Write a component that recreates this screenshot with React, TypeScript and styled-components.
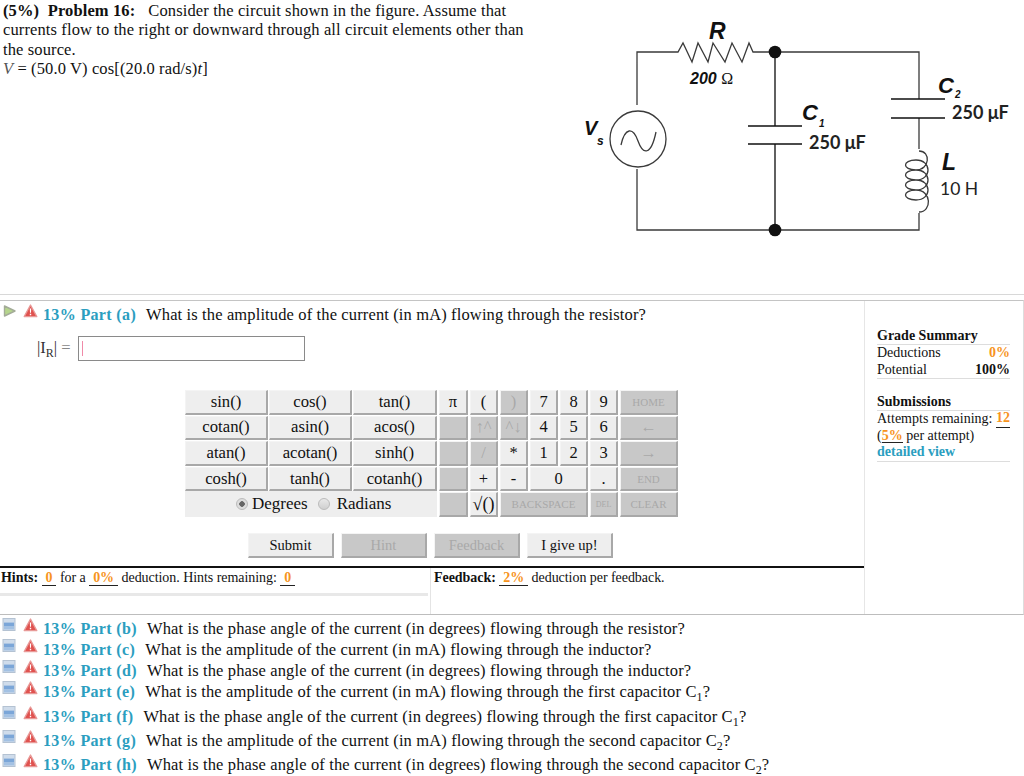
import React from 'react';
import styled, { createGlobalStyle } from 'styled-components';

const GlobalStyle = createGlobalStyle`
  html, body {
    margin: 0;
    padding: 0;
    background: #fff;
    font-family: "Liberation Serif", "Times New Roman", serif;
    color: #111;
  }
`;

const trigKeys = [
  'sin()', 'cos()', 'tan()',
  'cotan()', 'asin()', 'acos()',
  'atan()', 'acotan()', 'sinh()',
  'cosh()', 'tanh()', 'cotanh()',
];

type PadKey = { label: string; off?: boolean; span?: number; size?: number };

const padKeys: PadKey[] = [
  { label: 'π' }, { label: '(' }, { label: ')', off: true }, { label: '7' }, { label: '8' }, { label: '9' }, { label: 'HOME', off: true, size: 11 },
  { label: '', off: true }, { label: '↑^', off: true }, { label: '^↓', off: true }, { label: '4' }, { label: '5' }, { label: '6' }, { label: '←', off: true },
  { label: '', off: true }, { label: '/', off: true }, { label: '*' }, { label: '1' }, { label: '2' }, { label: '3' }, { label: '→', off: true },
  { label: '', off: true }, { label: '+' }, { label: '-' }, { label: '0', span: 2 }, { label: '.' }, { label: 'END', off: true, size: 11 },
  { label: '', off: true }, { label: '√()', size: 18 }, { label: 'BACKSPACE', off: true, span: 3, size: 11 }, { label: 'DEL', off: true, size: 8 }, { label: 'CLEAR', off: true, size: 11 },
];

const parts: { letter: string; text: React.ReactNode; height: number }[] = [
  { letter: 'b', height: 21, text: 'What is the phase angle of the current (in degrees) flowing through the resistor?' },
  { letter: 'c', height: 21, text: 'What is the amplitude of the current (in mA) flowing through the inductor?' },
  { letter: 'd', height: 21, text: 'What is the phase angle of the current (in degrees) flowing through the inductor?' },
  { letter: 'e', height: 25, text: <>What is the amplitude of the current (in mA) flowing through the first capacitor C<sub>1</sub>?</> },
  { letter: 'f', height: 24, text: <>What is the phase angle of the current (in degrees) flowing through the first capacitor C<sub>1</sub>?</> },
  { letter: 'g', height: 24, text: <>What is the amplitude of the current (in mA) flowing through the second capacitor C<sub>2</sub>?</> },
  { letter: 'h', height: 24, text: <>What is the phase angle of the current (in degrees) flowing through the second capacitor C<sub>2</sub>?</> },
];

const PlayIcon = () => (
  <svg width="15" height="14" viewBox="0 0 15 14">
    <path d="M2.5 2 L13 7 L2.5 12 Z" fill="#b5d58c" stroke="#a3ab98" strokeWidth="1.4" strokeLinejoin="round" />
  </svg>
);

const WarnIcon = () => (
  <svg width="15" height="14" viewBox="0 0 15 14">
    <path d="M7.5 1 L13.8 12.6 L1.2 12.6 Z" fill="#e0524f" stroke="#e89a98" strokeWidth="1.3" strokeLinejoin="round" />
    <path d="M6.8 4.4 h1.4 l-0.2 4.4 h-1 Z M6.8 9.8 h1.4 v1.4 h-1.4 Z" fill="#fff" />
  </svg>
);

const MinusIcon = () => (
  <svg width="15" height="14" viewBox="0 0 15 14">
    <rect x="1" y="0.5" width="12" height="12" fill="#cfdceb" stroke="#b4c2d2" />
    <rect x="2" y="4.6" width="10" height="3.4" fill="#7ba6d8" />
    <rect x="2" y="8" width="10" height="3.4" fill="#a3c1e3" />
  </svg>
);

const Circuit = () => (
  <CircuitSvg width="464" height="250" viewBox="560 0 464 250">
    <g fill="none" stroke="#3a3a3a" strokeWidth="1.3">
      <path d="M637 105 V52 H678 L683 43 L692 62 L698 43 L708 62 L713 43 L725 62 L732 43 L742 62 L749 43 L753 52 H919 V99" />
      <path d="M637 169 V230 H919 V213" />
      <path d="M775 52 V126 M775 144 V230" strokeWidth="1.6" />
      <path d="M919 118 V149" />
      <path d="M748 126 H802 M748 144 H802 M891 99 H945 M891 118 H945" stroke="#111" strokeWidth="1.6" />
      <circle cx="638" cy="139" r="28" />
      <path d="M621 145 C625 127 633 127 638 141 C643 155 651 156 656 132" />
      <path d="M919 151 C931 151 930 170 916 170 C902 170 902 160 916 160 C932 160 932 180 916 180 C902 180 902 170 916 170 C932 170 932 190 916 190 C902 190 902 180 916 180 C932 180 932 200 916 200 C902 200 902 190 916 190 C932 190 932 212 919 212" />
    </g>
    <circle cx="775" cy="52" r="6.3" fill="#111" />
    <circle cx="775" cy="230" r="6.3" fill="#111" />
    <CircuitLabel x="709" y="39" $size={23}>R</CircuitLabel>
    <CircuitLabel x="690" y="84" $size={16}>200 <tspan fontFamily='"Liberation Serif", serif' fontStyle="normal" fontWeight="400">Ω</tspan></CircuitLabel>
    <CircuitLabel x="584" y="135" $size={20}>V</CircuitLabel>
    <CircuitLabel x="597" y="145" $size={12}>s</CircuitLabel>
    <CircuitLabel x="802" y="120" $size={22}>C</CircuitLabel>
    <CircuitLabel x="819" y="127" $size={10}>1</CircuitLabel>
    <CircuitValue x="809" y="149">250 μF</CircuitValue>
    <CircuitLabel x="938" y="93" $size={22}>C</CircuitLabel>
    <CircuitLabel x="955" y="98" $size={10}>2</CircuitLabel>
    <CircuitValue x="952" y="119">250 μF</CircuitValue>
    <CircuitLabel x="942" y="170" $size={23}>L</CircuitLabel>
    <CircuitValue x="940" y="195" $light>10 H</CircuitValue>
  </CircuitSvg>
);

export default function App() {
  return (
    <Page>
      <GlobalStyle />
      <Header>
        <Statement>
          <StatementLine>
            <StatementHead>(5%)&nbsp; Problem 16:</StatementHead>
            <span>Consider the circuit shown in the figure. Assume that</span>
          </StatementLine>
          <StatementLine>currents flow to the right or downward through all circuit elements other than</StatementLine>
          <StatementLine>the source.</StatementLine>
          <StatementLine><Muted>V</Muted> = (50.0 V) cos[(20.0 rad/s)<i>t</i>]</StatementLine>
        </Statement>
        <Circuit />
      </Header>

      <PartBox>
        <MainColumn>
          <PartRow $height={21} $top>
            <IconSlot><PlayIcon /></IconSlot>
            <IconSlot><WarnIcon /></IconSlot>
            <PartLabel>13% Part (a)</PartLabel>
            <PartText>What is the amplitude of the current (in mA) flowing through the resistor?</PartText>
          </PartRow>

          <AnswerRow>
            <AnswerLabel><Dark>|I<sub>R</sub>|</Dark> =</AnswerLabel>
            <AnswerInput><Caret /></AnswerInput>
          </AnswerRow>

          <Calculator>
            <TrigPanel>
              <TrigGrid>
                {trigKeys.map((k) => <TrigKey key={k}>{k}</TrigKey>)}
              </TrigGrid>
              <AngleRow>
                <Radio $checked /><span>Degrees</span>
                <Radio /><span>Radians</span>
              </AngleRow>
            </TrigPanel>
            <PadGrid>
              {padKeys.map((k, i) => (
                <PadKeyCell key={i} $off={k.off} $span={k.span} $size={k.size}>{k.label}</PadKeyCell>
              ))}
            </PadGrid>
          </Calculator>

          <ActionRow>
            <ActionButton>Submit</ActionButton>
            <ActionButton $off>Hint</ActionButton>
            <ActionButton $off>Feedback</ActionButton>
            <ActionButton>I give up!</ActionButton>
          </ActionRow>

          <InfoRow>
            <InfoCell>
              <InfoLine>
                <b>Hints:</b>&nbsp;<Amount>0</Amount>&nbsp;for a&nbsp;<Amount>0%</Amount>&nbsp;deduction. Hints remaining:&nbsp;<Amount>0</Amount>
              </InfoLine>
              <HintRule />
            </InfoCell>
            <FeedbackCell>
              <InfoLine>
                <b>Feedback:</b>&nbsp;<Amount>2%</Amount>&nbsp;deduction per feedback.
              </InfoLine>
            </FeedbackCell>
          </InfoRow>
        </MainColumn>

        <SummaryColumn>
          <SummaryTitle>Grade Summary</SummaryTitle>
          <SummaryRow><span>Deductions</span><Orange>0%</Orange></SummaryRow>
          <SummaryRow $last><span>Potential</span><b>100%</b></SummaryRow>
          <SummaryTitle $gap>Submissions</SummaryTitle>
          <SummaryRow><span>Attempts remaining:</span><Amount $tight>12</Amount></SummaryRow>
          <SummaryPlain>(<Amount $tight>5%</Amount> per attempt)</SummaryPlain>
          <DetailLink>detailed view</DetailLink>
        </SummaryColumn>
      </PartBox>

      <PartList>
        {parts.map((p) => (
          <PartRow key={p.letter} $height={p.height}>
            <IconSlot><MinusIcon /></IconSlot>
            <IconSlot><WarnIcon /></IconSlot>
            <PartLabel>13% Part ({p.letter})</PartLabel>
            <PartText>{p.text}</PartText>
          </PartRow>
        ))}
      </PartList>
    </Page>
  );
}

const Page = styled.div`
  width: 1024px;
  height: 776px;
  overflow: hidden;
`;

const Header = styled.div`
  height: 294px;
  display: flex;
  justify-content: space-between;
  border-bottom: 1px solid #d8d8d8;
  margin-bottom: 5px;
`;

const Statement = styled.div`
  width: 530px;
  padding: 1px 0 0 3px;
  font-size: 16.5px;
  letter-spacing: 0.12px;
  line-height: 19.4px;
  box-sizing: border-box;
`;

const StatementLine = styled.div`
  white-space: nowrap;
`;

const StatementHead = styled.b`
  font-weight: 700;
  margin-right: 13px;
`;

const Muted = styled.i`
  color: #555;
`;

const CircuitSvg = styled.svg`
  display: block;
`;

const CircuitLabel = styled.text<{ $size: number }>`
  font-family: "Liberation Sans", Arial, sans-serif;
  font-weight: 700;
  font-style: italic;
  font-size: ${(p) => p.$size}px;
  fill: #111;
`;

const CircuitValue = styled.text<{ $light?: boolean }>`
  font-family: "Lato", "Open Sans", sans-serif;
  font-weight: ${(p) => (p.$light ? 400 : 700)};
  font-size: ${(p) => (p.$light ? 17.5 : 18)}px;
  fill: #222;
`;

const PartBox = styled.div`
  display: flex;
  height: 315px;
  box-sizing: border-box;
  border-top: 1px solid #c4c4c4;
  border-bottom: 1px solid #bdbdbd;
  border-right: 1px solid #ddd;
`;

const MainColumn = styled.div`
  width: 864px;
  display: flex;
  flex-direction: column;
  border-right: 1px solid #e6e6e6;
`;

const PartRow = styled.div<{ $height: number; $top?: boolean }>`
  display: flex;
  align-items: baseline;
  height: ${(p) => p.$height}px;
  padding-top: ${(p) => (p.$top ? 3 : 0)}px;
  line-height: 21px;
  white-space: nowrap;
  font-size: 16.5px;

  sub {
    font-size: 12px;
    line-height: 0;
  }
`;

const IconSlot = styled.span`
  width: 21px;
  padding-left: 2px;
  box-sizing: border-box;
  align-self: flex-start;
  display: flex;
  svg {
    display: block;
  }
`;

const PartLabel = styled.b`
  color: #2b9ec0;
  font-weight: 700;
  font-size: 16px;
  letter-spacing: 0.35px;
  margin: 0 10px 0 1px;
`;

const PartText = styled.span`
  color: #111;
  letter-spacing: 0.13px;
`;

const AnswerRow = styled.div`
  display: flex;
  align-items: center;
  margin-top: 10px;
  padding-left: 37px;
  height: 26px;
`;

const AnswerLabel = styled.span`
  font-size: 16.5px;
  color: #888;
  width: 41px;

  sub {
    font-size: 12px;
    line-height: 0;
  }
`;

const Dark = styled.span`
  color: #333;
`;

const AnswerInput = styled.div`
  width: 227px;
  height: 25px;
  box-sizing: border-box;
  border: 1px solid #8a8a8a;
  padding: 4px 3px;
`;

const Caret = styled.div`
  width: 1px;
  height: 15px;
  background: #f08aa8;
`;

const Calculator = styled.div`
  display: flex;
  gap: 2px;
  margin: 29px 0 0 185px;
`;

const TrigPanel = styled.div`
  width: 252px;
`;

const TrigGrid = styled.div`
  display: grid;
  grid-template-columns: 83px 83px 84px;
  grid-auto-rows: 24.6px;
  gap: 1px;
`;

const KeyBase = styled.div`
  display: flex;
  align-items: center;
  justify-content: center;
  box-sizing: border-box;
  border-right: 2px solid #a8a8a8;
  border-bottom: 2px solid #a8a8a8;
  border-left: 1px solid #f4f4f4;
  border-top: 1px solid #f4f4f4;
  white-space: nowrap;
`;

const TrigKey = styled(KeyBase)`
  background: #eee;
  font-size: 16.7px;
`;

const AngleRow = styled.div`
  height: 26px;
  background: #eee;
  display: flex;
  align-items: center;
  font-size: 17px;
  padding-left: 51px;
`;

const Radio = styled.span<{ $checked?: boolean }>`
  width: 12px;
  height: 12px;
  border-radius: 50%;
  box-sizing: border-box;
  border: 1px solid #bbb;
  background: ${(p) =>
    p.$checked ? 'radial-gradient(circle, #666 0 2.5px, #ddd 3px)' : 'linear-gradient(#e8e8e8, #cfcfcf)'};
  margin-right: ${(p) => (p.$checked ? 4 : 7)}px;
  margin-left: ${(p) => (p.$checked ? 0 : 10)}px;
`;

const PadGrid = styled.div`
  display: grid;
  width: 239px;
  grid-template-columns: 29px 28px 28px 28px 28px 28px 58px;
  grid-auto-rows: 24.6px;
  gap: 1px 2px;
  align-content: start;
`;

const PadKeyCell = styled(KeyBase)<{ $off?: boolean; $span?: number; $size?: number }>`
  grid-column: span ${(p) => p.$span ?? 1};
  background: ${(p) => (p.$off ? '#c8c8c8' : '#eee')};
  color: ${(p) => (p.$off ? '#a9a9a9' : '#111')};
  font-size: ${(p) => p.$size ?? 16.5}px;
`;

const ActionRow = styled.div`
  display: flex;
  gap: 7px;
  margin: 16px 0 0 248px;
`;

const ActionButton = styled(KeyBase)<{ $off?: boolean }>`
  width: 86px;
  height: 25px;
  font-size: 14.5px;
  background: ${(p) => (p.$off ? '#c8c8c8' : '#eee')};
  color: ${(p) => (p.$off ? '#a9a9a9' : '#111')};
`;

const InfoRow = styled.div`
  flex: 1;
  display: flex;
  margin-top: 8px;
  border-top: 2px solid #111;
`;

const InfoCell = styled.div`
  width: 431px;
  box-sizing: border-box;
  border-right: 1px solid #e4e4e4;
`;

const FeedbackCell = styled.div`
  flex: 1;
  padding-left: 2px;
`;

const InfoLine = styled.div`
  font-size: 14px;
  line-height: 18px;
  padding: 1px 0 0 1px;
  white-space: nowrap;
  letter-spacing: -0.05px;
`;

const HintRule = styled.div`
  height: 3px;
  width: 428px;
  margin-top: 6px;
  background: #e8e8e8;
`;

const Amount = styled.b<{ $tight?: boolean }>`
  display: inline-block;
  color: #f7941d;
  font-weight: 700;
  text-align: center;
  padding: 0 ${(p) => (p.$tight ? 0 : 4)}px;
  border-bottom: 1.5px solid #222;
  line-height: ${(p) => (p.$tight ? 13 : 14)}px;
`;

const SummaryColumn = styled.div`
  width: 133px;
  margin-left: 12px;
  padding-top: 27px;
  font-size: 14px;
  line-height: 16.6px;
`;

const SummaryTitle = styled.div<{ $gap?: boolean }>`
  font-weight: 700;
  line-height: 16px;
  border-bottom: 1px solid #ddd;
  margin-top: ${(p) => (p.$gap ? 15 : 0)}px;
`;

const SummaryRow = styled.div<{ $last?: boolean }>`
  display: flex;
  justify-content: space-between;
  border-bottom: ${(p) => (p.$last ? '1px solid #ddd' : 'none')};
`;

const SummaryPlain = styled.div``;

const Orange = styled.b`
  color: #f7941d;
`;

const DetailLink = styled.div`
  color: #2b9ec0;
  font-weight: 700;
  border-bottom: 1px solid #ddd;
`;

const PartList = styled.div`
  padding-top: 3px;
`;
